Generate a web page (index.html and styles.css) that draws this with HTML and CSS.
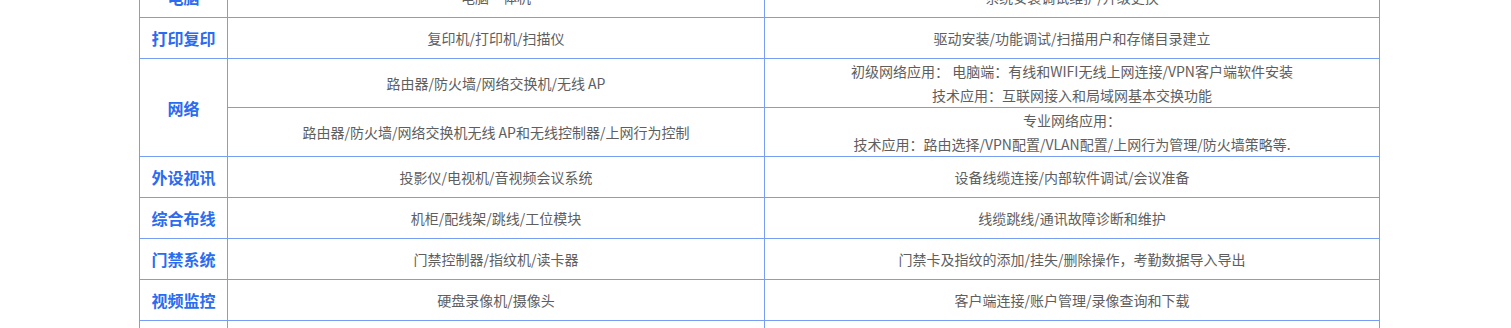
FILE: index.html
```html
<!DOCTYPE html>
<html lang="zh-CN">
<head>
<meta charset="utf-8">
<title>服务范围</title>
<link rel="stylesheet" href="styles.css">
</head>
<body>
<div class="page">
  <table class="svc">
    <colgroup>
      <col class="c-cat">
      <col class="c-dev">
      <col class="c-work">
    </colgroup>
    <tbody>
      <tr class="row">
        <th class="cat">电脑</th>
        <td>电脑一体机</td>
        <td>系统安装调试维护/升级更换</td>
      </tr>
      <tr class="row">
        <th class="cat">打印复印</th>
        <td>复印机/打印机/扫描仪</td>
        <td>驱动安装/功能调试/扫描用户和存储目录建立</td>
      </tr>
      <tr class="row-2l">
        <th class="cat" rowspan="2">网络</th>
        <td>路由器/防火墙/网络交换机/无线 AP</td>
        <td>初级网络应用： 电脑端：有线和WIFI无线上网连接/VPN客户端软件安装<br>技术应用：互联网接入和局域网基本交换功能</td>
      </tr>
      <tr class="row-2l">
        <td>路由器/防火墙/网络交换机无线 AP和无线控制器/上网行为控制</td>
        <td>专业网络应用：<br>技术应用：路由选择/VPN配置/VLAN配置/上网行为管理/防火墙策略等.</td>
      </tr>
      <tr class="row">
        <th class="cat">外设视讯</th>
        <td>投影仪/电视机/音视频会议系统</td>
        <td>设备线缆连接/内部软件调试/会议准备</td>
      </tr>
      <tr class="row">
        <th class="cat">综合布线</th>
        <td>机柜/配线架/跳线/工位模块</td>
        <td>线缆跳线/通讯故障诊断和维护</td>
      </tr>
      <tr class="row">
        <th class="cat">门禁系统</th>
        <td>门禁控制器/指纹机/读卡器</td>
        <td>门禁卡及指纹的添加/挂失/删除操作，考勤数据导入导出</td>
      </tr>
      <tr class="row">
        <th class="cat">视频监控</th>
        <td>硬盘录像机/摄像头</td>
        <td>客户端连接/账户管理/录像查询和下载</td>
      </tr>
      <tr class="row">
        <th class="cat">服务器</th>
        <td>服务器/存储设备</td>
        <td>系统安装/数据备份/故障排查</td>
      </tr>
    </tbody>
  </table>
</div>
</body>
</html>
```

FILE: styles.css
```css
html, body {
  margin: 0;
  padding: 0;
  background: #ffffff;
  overflow: hidden;
}

.page {
  padding-left: 139px;
}

.svc {
  margin-top: -24px;
  width: 1240px;
  table-layout: fixed;
  border-collapse: collapse;
  font-family: "Noto Sans CJK SC", "Microsoft YaHei", sans-serif;
  font-size: 14px;
  color: #5e5e5e;
}

.c-cat { width: 88px; }
.c-dev { width: 537px; }
.c-work { width: 615px; }

.svc th,
.svc td {
  border: 1px solid #779ef2;
  padding: 0;
  text-align: center;
  vertical-align: middle;
  line-height: 24px;
}

.svc .cat {
  font-size: 16px;
  font-weight: bold;
  color: #2a6cf0;
}

.row th,
.row td {
  height: 40px;
}

.row-2l th,
.row-2l td {
  height: 48px;
}
```
